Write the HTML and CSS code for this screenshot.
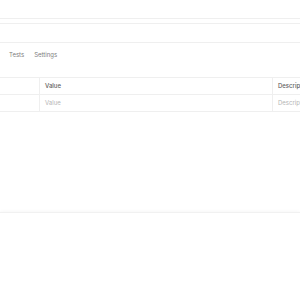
FILE: index.html
```html
<!DOCTYPE html>
<html lang="en">
	<head>
		<meta charset="UTF-8" />
		<meta name="viewport" content="width=device-width, initial-scale=1.0" />
		<title>Request</title>
		<link rel="stylesheet" href="styles.css">
	</head>
	<body>
		<div id="app">
			<div class="tab-bar"></div>
			<div class="url-bar"></div>
			<div class="request-tabs">
				<span class="request-tab">Tests</span>
				<span class="request-tab">Settings</span>
			</div>
			<div class="params">
				<div class="params-row params-head">
					<div class="cell cell-key"></div>
					<div class="cell cell-value">Value</div>
					<div class="cell cell-desc">Descript</div>
				</div>
				<div class="params-row">
					<div class="cell cell-key"></div>
					<div class="cell cell-value placeholder">Value</div>
					<div class="cell cell-desc placeholder">Descript</div>
				</div>
			</div>
			<div class="response"></div>
		</div>
	</body>
</html>
```

FILE: styles.css
```css
:root {
	--line-color: #efefef;
	--tab-text-color: #7d7d7d;
	--head-text-color: #5e5e5e;
	--placeholder-color: #b5b5b5;
}
body {
	font-family: Inter, "Open Sans", sans-serif;
	margin: 0;
	padding: 0;
	background-color: #fff;
	overflow: hidden;
	-webkit-font-smoothing: antialiased;
}
#app {
	height: 300px;
	display: flex;
	flex-direction: column;
}
.tab-bar {
	height: 18px;
	border-bottom: 1px solid var(--line-color);
}
.url-bar {
	height: 18px;
	margin-top: 4px;
	border-top: 1px solid var(--line-color);
	border-bottom: 1px solid var(--line-color);
}
.request-tabs {
	display: flex;
	gap: 10px;
	padding: 7px 0 0 9px;
	height: 27px;
	box-sizing: border-box;
}
.request-tab {
	font-size: 6px;
	line-height: 9px;
	color: var(--tab-text-color);
}
.params {
	margin-top: 7px;
	border-top: 1px solid var(--line-color);
	border-bottom: 1px solid var(--line-color);
}
.params-row {
	display: flex;
	height: 16px;
}
.params-row + .params-row {
	border-top: 1px solid var(--line-color);
}
.cell {
	font-size: 6px;
	line-height: 16px;
	padding-left: 5px;
	box-sizing: border-box;
	white-space: nowrap;
	overflow: hidden;
}
.cell-key {
	width: 39px;
	padding: 0;
}
.cell-value {
	width: 233px;
	border-left: 1px solid var(--line-color);
}
.cell-desc {
	flex: 1;
	border-left: 1px solid var(--line-color);
}
.params-head .cell {
	color: var(--head-text-color);
	font-weight: 500;
}
.placeholder {
	color: var(--placeholder-color);
}
.response {
	margin-top: 100px;
	flex: 1;
	background-color: #fff;
	border-top: 1px solid #f1f1f1;
	box-shadow: 0 -1px 3px rgba(0, 0, 0, 0.03);
}
```
